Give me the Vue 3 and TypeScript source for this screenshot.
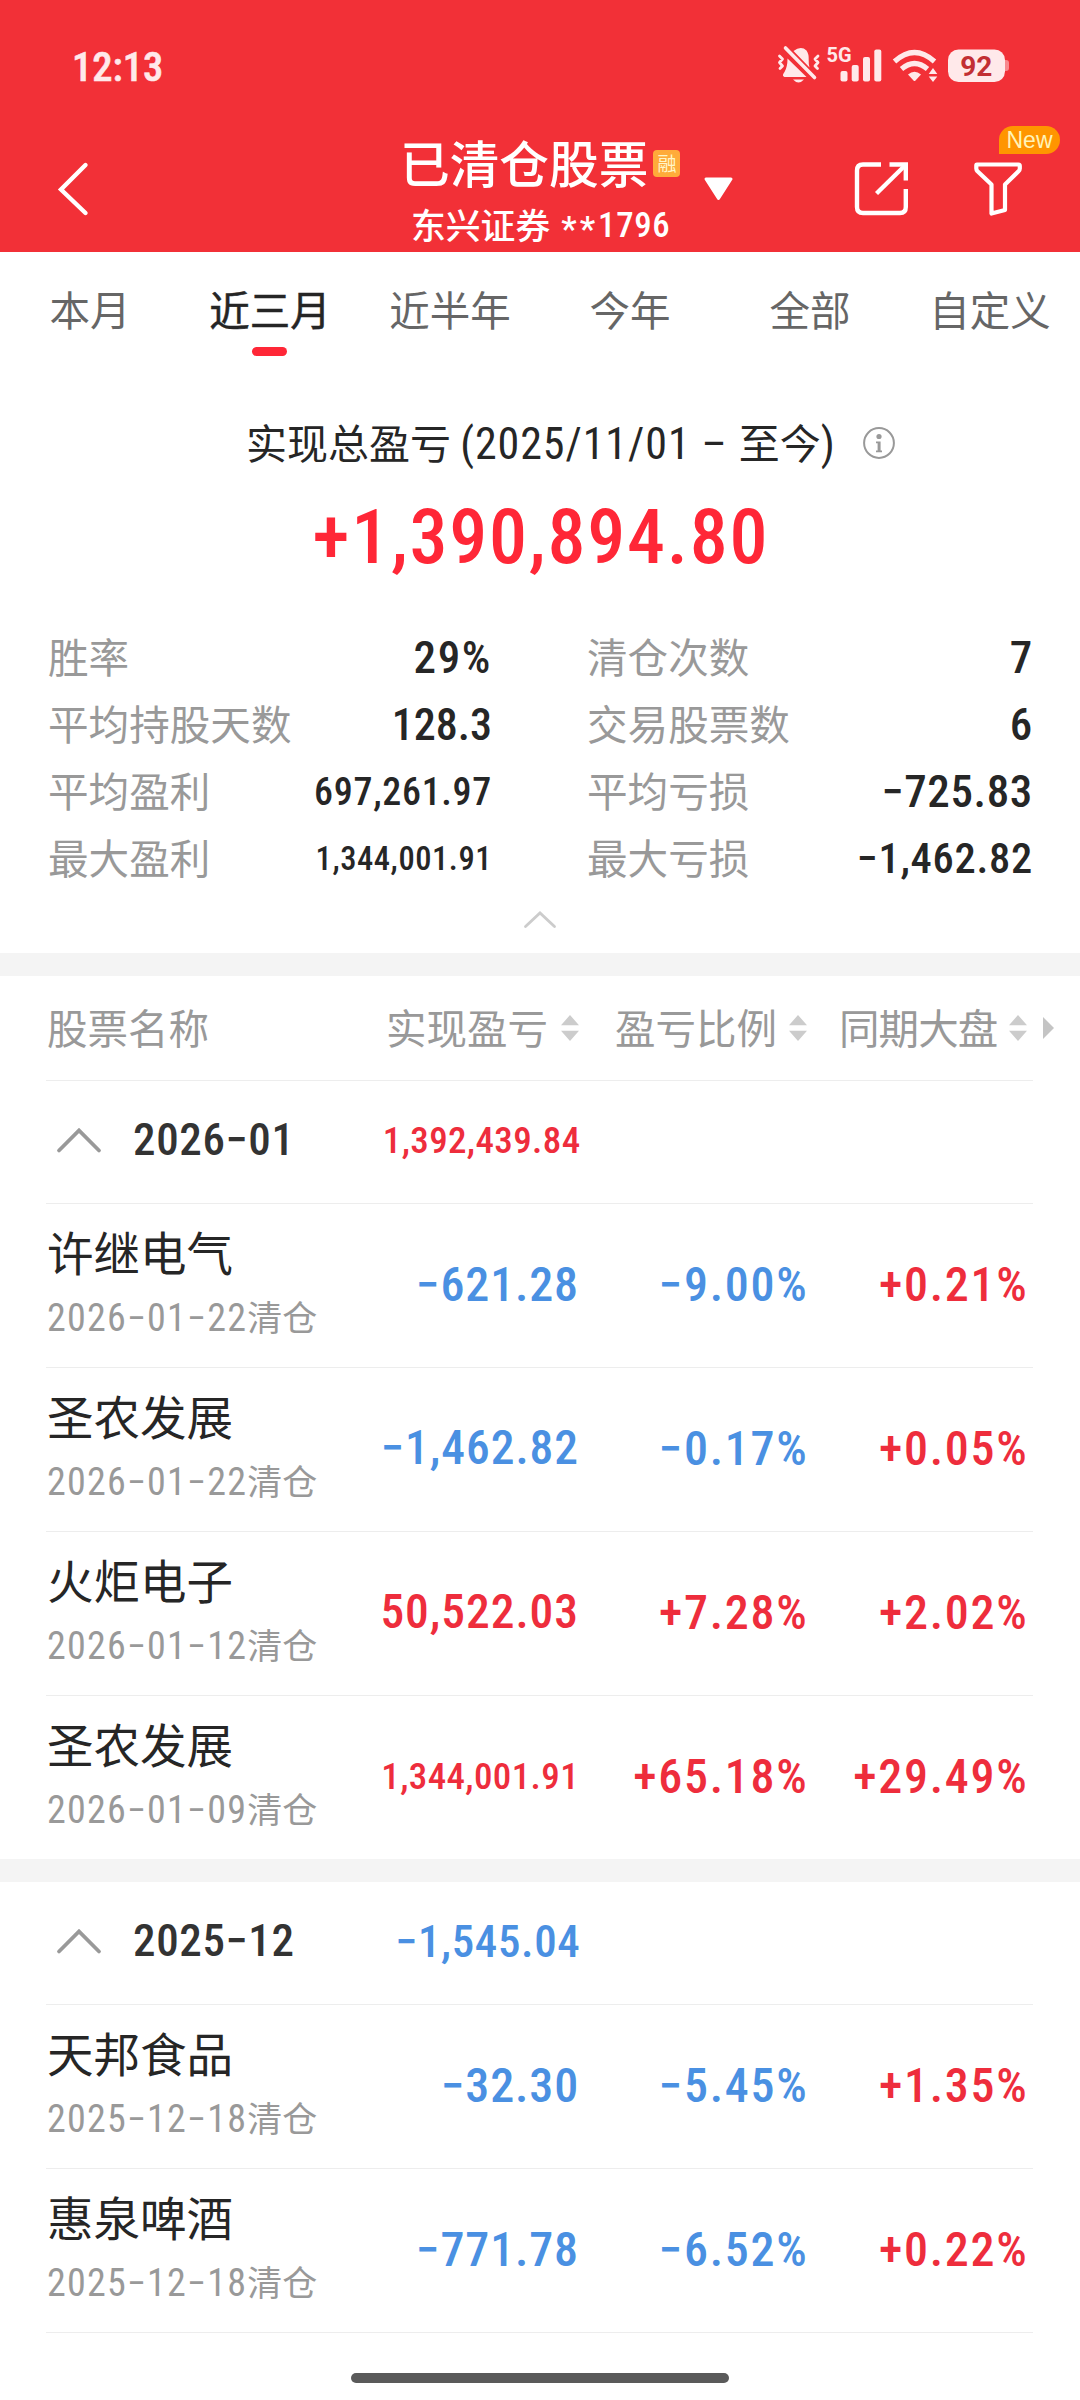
<script setup lang="ts">
type Tone = 'up' | 'down'

interface Stat {
  label: string
  value: string
  size: string
}

interface Row {
  name: string
  date: string
  profit: string
  profitTone: Tone
  profitSize: string
  ratio: string
  ratioTone: Tone
  market: string
}

interface Group {
  month: string
  total: string
  tone: Tone
  size: string
  rows: Row[]
}

const tabs: string[] = ['本月', '近三月', '近半年', '今年', '全部', '自定义']
const activeTab = '近三月'

const stats: Stat[] = [
  { label: '胜率', value: '29%', size: 'n45 wide' },
  { label: '清仓次数', value: '7', size: 'n45' },
  { label: '平均持股天数', value: '128.3', size: 'n44' },
  { label: '交易股票数', value: '6', size: 'n45' },
  { label: '平均盈利', value: '697,261.97', size: 'n38' },
  { label: '平均亏损', value: '−725.83', size: 'n45' },
  { label: '最大盈利', value: '1,344,001.91', size: 'n33' },
  { label: '最大亏损', value: '−1,462.82', size: 'n43' },
]

const columns: string[] = ['实现盈亏', '盈亏比例', '同期大盘']

const groups: Group[] = [
  {
    month: '2026−01',
    total: '1,392,439.84',
    tone: 'up',
    size: 'n37',
    rows: [
      { name: '许继电气', date: '2026−01−22', profit: '−621.28', profitTone: 'down', profitSize: 'n48', ratio: '−9.00%', ratioTone: 'down', market: '+0.21%' },
      { name: '圣农发展', date: '2026−01−22', profit: '−1,462.82', profitTone: 'down', profitSize: 'n47', ratio: '−0.17%', ratioTone: 'down', market: '+0.05%' },
      { name: '火炬电子', date: '2026−01−12', profit: '50,522.03', profitTone: 'up', profitSize: 'n47', ratio: '+7.28%', ratioTone: 'up', market: '+2.02%' },
      { name: '圣农发展', date: '2026−01−09', profit: '1,344,001.91', profitTone: 'up', profitSize: 'n37', ratio: '+65.18%', ratioTone: 'up', market: '+29.49%' },
    ],
  },
  {
    month: '2025−12',
    total: '−1,545.04',
    tone: 'down',
    size: 'n45',
    rows: [
      { name: '天邦食品', date: '2025−12−18', profit: '−32.30', profitTone: 'down', profitSize: 'n48', ratio: '−5.45%', ratioTone: 'down', market: '+1.35%' },
      { name: '惠泉啤酒', date: '2025−12−18', profit: '−771.78', profitTone: 'down', profitSize: 'n48', ratio: '−6.52%', ratioTone: 'down', market: '+0.22%' },
    ],
  },
]
</script>

<template>
  <div class="page">
    <header class="header">
      <div class="status">
        <span class="clock">12:13</span>
        <svg class="status-icons" width="240" height="48" viewBox="772 40 240 48">
          <g fill="#ffe9ea">
            <path d="M784.500 77 C782 76 783 74 784.500 72 Q787.500 67 787.500 58.500 L806.500 77 Z" />
            <path d="M793.500 51 Q801 45.500 806.500 50.500 Q809 54 808.700 60 Q808.500 64 809.500 67.500 Z" />
            <path d="M793 79.500 H804 Q798.500 85.500 793 79.500 Z" />
          </g>
          <g fill="none" stroke="#ffe9ea" stroke-linecap="round" stroke-linejoin="round">
            <path d="M785.500 48 L814.500 77.500" stroke-width="3.600" />
            <path d="M779.500 56 l3 3 l-3 3.500 l3 3.500 l-2.500 2.500 M818 56 l-3 3 l3 3.500 l-3 3.500 l2.500 2.500" stroke-width="2.800" />
          </g>
          <text x="826.500" y="61.500" class="five-g">5G</text>
          <g fill="#ffe9ea">
            <rect x="840.500" y="71" width="7" height="10.500" rx="2" />
            <rect x="851.700" y="65" width="7" height="16.500" rx="2" />
            <rect x="863" y="57" width="7" height="24.500" rx="2" />
            <rect x="874.300" y="49.500" width="7" height="32" rx="2" />
          </g>
          <g fill="none" stroke="#ffe9ea" stroke-width="5.200">
            <path d="M894.500 61.500 Q914.500 43.500 934.500 61.500" />
            <path d="M901.500 69 Q914.500 58 927.500 69" />
          </g>
          <path d="M908 74.500 Q914.500 69 921 74.500 L915.500 80.500 Q914.500 81.500 913.500 80.500 Z" fill="#ffe9ea" />
          <path d="M933 68 L937.300 74 H928.700 Z M933 82 L937.300 76.500 H928.700 Z" fill="#ffe9ea" />
          <path d="M1005 60 h1 q3 0 3 3 v5 q0 3 -3 3 h-1 z" fill="#f8888d" />
          <rect x="948" y="49.500" width="57" height="32.500" rx="10.500" fill="#ffe9ea" />
          <text x="976.300" y="75.700" class="battery">92</text>
        </svg>
      </div>
      <div class="nav">
        <svg class="back" width="34" height="60" viewBox="56 159 34 60">
          <path d="M85.500 165 L61 189.500 L85.500 213" fill="none" stroke="#fff" stroke-width="4.400" stroke-linecap="round" />
        </svg>
        <div class="title-box">
          <div class="title-line">
            <h1 class="title">已清仓股票</h1>
            <span class="margin-tag">融</span>
          </div>
          <p class="account">东兴证券 <span class="stars">**</span><span class="acct-num">1796</span></p>
        </div>
        <svg class="dropdown" width="32" height="28" viewBox="702 175 32 28">
          <path d="M706 179 H731 L718.500 198.500 Z" fill="#fff" stroke="#fff" stroke-width="3" stroke-linejoin="round" />
        </svg>
        <svg class="share" width="60" height="60" viewBox="851 158 60 60">
          <g fill="none" stroke="#fff" stroke-width="4.400">
            <path d="M881 164.500 H863 Q857 164.500 857 170.500 V207 Q857 213 863 213 H900 Q905.800 213 905.800 207 V189" />
            <path d="M889.500 164.500 H905.800 V180.500" />
            <path d="M905 165.500 L876.500 193.500" />
          </g>
        </svg>
        <div class="filter">
          <svg width="56" height="60" viewBox="970 158 56 60">
            <path d="M977 164.500 H1018.500 Q1019.800 164.500 1019.800 166 V168.500 Q1019.800 170 1018.500 171.300 L1005 184.500 V210 L991.500 213.500 V184.500 L977.500 171.300 Q976.300 170 976.300 168.500 V165.500 Q976.300 164.500 977 164.500 Z" fill="none" stroke="#fff" stroke-width="4.200" stroke-linejoin="round" />
          </svg>
          <span class="new">New</span>
        </div>
      </div>
    </header>

    <nav class="tabs">
      <span v-for="tab in tabs" :key="tab" class="tab" :class="{ active: tab === activeTab }">{{ tab }}</span>
    </nav>

    <section class="summary">
      <div class="range">
        <span class="range-text">实现总盈亏 <span class="range-num">(2025/11/01 – </span>至今<span class="range-num">)</span></span>
        <svg class="info" width="34" height="34" viewBox="0 0 34 34">
          <circle cx="17" cy="17" r="14.900" fill="none" stroke="#999" stroke-width="2" />
          <circle cx="17" cy="10.500" r="2.600" fill="#999" />
          <path d="M14 15.500 h4.600 v9 h1.400 v1.800 h-6 v-1.800 h1.600 v-7.200 h-1.600 z" fill="#999" />
        </svg>
      </div>
      <div class="total">+1,390,894.80</div>
      <div class="stats">
        <div v-for="s in stats" :key="s.label" class="stat">
          <span class="stat-label">{{ s.label }}</span>
          <span class="num" :class="s.size">{{ s.value }}</span>
        </div>
      </div>
      <svg class="fold" width="36" height="22" viewBox="0 0 36 22">
        <path d="M3.500 17.500 L18 4 L32.500 17.500" fill="none" stroke="#ccc" stroke-width="2.800" stroke-linecap="round" />
      </svg>
    </section>

    <section class="table">
      <div class="thead">
        <span class="th-name">股票名称</span>
        <span v-for="(c, i) in columns" :key="c" class="th" :class="'th' + i">
          <span>{{ c }}</span>
          <svg width="18" height="26" viewBox="0 0 18 26">
            <path d="M0 10.200 L9 0 L18 10.200 Z M0 15.800 L9 26 L18 15.800 Z" fill="#ccc" />
          </svg>
        </span>
        <svg class="more" width="11" height="22" viewBox="0 0 11 22">
          <path d="M0 0 L11 11 L0 22 Z" fill="#c4c4c4" />
        </svg>
      </div>
      <div v-for="g in groups" :key="g.month" class="group">
        <div class="group-head">
          <svg class="chev" width="46" height="28" viewBox="0 0 46 28">
            <path d="M3 24.500 L23 4.500 L43 24.500" fill="none" stroke="#999" stroke-width="3.800" stroke-linecap="round" />
          </svg>
          <span class="num n45 month">{{ g.month }}</span>
          <span class="num group-total" :class="[g.size, g.tone]">{{ g.total }}</span>
        </div>
        <div v-for="(r, i) in g.rows" :key="i" class="row">
          <div class="stock">
            <div class="name">{{ r.name }}</div>
            <div class="date"><span class="num n38">{{ r.date }}</span>清仓</div>
          </div>
          <span class="num c1" :class="[r.profitSize, r.profitTone]">{{ r.profit }}</span>
          <span class="num n48 wide c2" :class="r.ratioTone">{{ r.ratio }}</span>
          <span class="num n48 wide c3 up">{{ r.market }}</span>
        </div>
      </div>
    </section>

    <div class="home"><i></i></div>
  </div>
</template>

<style>
body {
  margin: 0;
  background: #fff;
}
</style>

<style scoped>
.page {
  width: 1080px;
  height: 2400px;
  overflow: hidden;
  display: flex;
  flex-direction: column;
  background: #fff;
  color: #262626;
  font-family: 'Noto Sans CJK SC', sans-serif;
}
.header {
  height: 252px;
  flex: none;
  background: #f23037;
  color: #fff;
}
.status {
  height: 126px;
  display: flex;
  justify-content: space-between;
  padding: 0 68px 0 72px;
}
.clock {
  margin-top: 43px;
  font: 500 40.500px/48px Roboto, sans-serif;
  font-stretch: 75%;
  -webkit-text-stroke: 0.600px #ffe9ea;
  color: #ffe9ea;
}
.status-icons {
  margin-top: 40px;
}
.five-g {
  font: 700 20px Roboto, sans-serif;
  fill: #ffe9ea;
}
.battery {
  font: 700 28px Roboto, sans-serif;
  fill: #c22f33;
  text-anchor: middle;
}
.nav {
  height: 126px;
  display: flex;
  align-items: flex-start;
}
.back {
  margin: 33px 0 0 56px;
}
.title-box {
  width: 280px;
  margin: 2px 0 0 313px;
}
.title-line {
  display: flex;
  align-items: center;
  height: 68px;
}
.title {
  margin: -3px 5px 0 -3px;
  font-size: 49.700px;
  line-height: 68px;
  font-weight: 500;
  white-space: nowrap;
}
.margin-tag {
  width: 27px;
  height: 27px;
  margin-top: 2px;
  border-radius: 4px;
  background: #ffab3a;
  color: #fff6c8;
  font-size: 19px;
  line-height: 26px;
  text-align: center;
}
.account {
  margin: 4px 0 0 8px;
  font-size: 34.800px;
  line-height: 48px;
  font-weight: 500;
  white-space: nowrap;
  display: flex;
}
.stars {
  margin-left: 11px;
  font-family: Roboto, sans-serif;
  letter-spacing: 3px;
  padding-top: 5px;
}
.acct-num {
  font-family: Roboto, sans-serif;
  font-weight: 500;
  font-stretch: 75%;
  letter-spacing: 0.700px;
  padding-top: 1px;
}
.dropdown {
  margin: 49px 0 0 19px;
}
.share {
  margin: 32px 0 0 117px;
}
.filter {
  position: relative;
  margin: 32px 0 0 59px;
}
.new {
  position: absolute;
  left: 29px;
  top: -32px;
  width: 61px;
  height: 28px;
  border-radius: 14px 14px 14px 0;
  background: #ff9500;
  color: #fff3b8;
  font: 400 23px/28px 'Liberation Sans', sans-serif;
  text-align: center;
}
.tabs {
  flex: none;
  height: 114px;
  display: flex;
}
.tab {
  width: 180px;
  padding-top: 27px;
  font-size: 40.500px;
  line-height: 60px;
  color: #666;
  text-align: center;
}
.tab.active {
  color: #252525;
  -webkit-text-stroke: 0.500px #252525;
}
.tab.active::after {
  content: '';
  display: block;
  width: 35px;
  height: 9px;
  margin: 8px 0 0 72px;
  border-radius: 5px;
  background: #ff2737;
}
.summary {
  flex: none;
  height: 587px;
  display: flex;
  flex-direction: column;
  align-items: center;
}
.range {
  display: flex;
  align-self: flex-start;
  align-items: center;
  margin: 46px 0 0 246px;
  height: 60px;
}
.range-text {
  width: 587px;
  font-size: 41px;
  line-height: 60px;
  white-space: nowrap;
}
.range-num {
  font-family: Roboto, sans-serif;
  font-size: 44px;
  font-stretch: 75%;
  letter-spacing: 0.920px;
  white-space: pre;
}
.info {
  margin: 1px 0 0 29px;
}
.total {
  margin-top: 20px;
  font: 500 76px/90px Roboto, sans-serif;
  font-stretch: 75%;
  letter-spacing: 0.023em;
  text-indent: 0.023em;
  color: #ff2737;
}
.stats {
  width: 1080px;
  box-sizing: border-box;
  padding: 0 48px 0 48px;
  margin-top: 42px;
  display: grid;
  grid-template-columns: 443px 445px;
  column-gap: 96px;
  grid-auto-rows: 67px;
}
.stat {
  display: flex;
  justify-content: space-between;
  align-items: center;
}
.stat .num {
  margin-right: -1px;
}
.stat-label {
  font-size: 40.600px;
  line-height: 60px;
  margin-top: -3px;
  color: #999;
}
.num {
  font-family: Roboto, sans-serif;
  font-weight: 500;
  font-stretch: 75%;
  white-space: nowrap;
}
.n48 {
  font-size: 48px;
  letter-spacing: 0.018em;
}
.n47 {
  font-size: 47.500px;
  letter-spacing: 0.020em;
}
.n45 {
  font-size: 45px;
  letter-spacing: 0.014em;
}
.n44 {
  font-size: 44px;
}
.n43 {
  font-size: 42.500px;
  letter-spacing: 0.017em;
}
.n38 {
  font-size: 38px;
  letter-spacing: 0.018em;
}
.n37 {
  font-size: 37px;
  letter-spacing: 0.010em;
}
.n33 {
  font-size: 32.500px;
  letter-spacing: 0.017em;
}
.wide {
  letter-spacing: 0.036em;
}
.fold {
  margin-top: 17px;
}
.table {
  flex: none;
  border-top: 23px solid #f4f4f4;
}
.thead {
  height: 104px;
  margin: 0 0 0 46px;
  display: flex;
  align-items: center;
  font-size: 40.500px;
  line-height: 60px;
  color: #999;
  white-space: nowrap;
  background: linear-gradient(#ededed, #ededed) 0 100% / 987px 1px no-repeat;
  padding-bottom: 1px;
}
.th-name {
  flex: none;
  width: 340px;
  text-indent: 1px;
  margin-top: -3px;
}
.th {
  flex: none;
  display: flex;
  align-items: center;
  justify-content: space-between;
}
.th span {
  margin-top: -3px;
}
.th0 {
  width: 193px;
}
.th1 {
  width: 192px;
  margin-left: 36px;
}
.th2 {
  width: 188px;
  margin-left: 32px;
  letter-spacing: -0.900px;
}
.more {
  flex: none;
  margin-left: 16px;
}
.group + .group {
  border-top: 23px solid #f4f4f4;
}
.group-head {
  height: 122px;
  margin: 0 47px 0 46px;
  border-bottom: 1px solid #ededed;
  display: flex;
  align-items: center;
}
.chev {
  margin: -4px 0 0 10px;
}
.month {
  width: 240px;
  margin: -5px 0 0 31px;
  color: #333;
}
.group-total {
  width: 207.500px;
  margin-top: -4px;
  text-align: right;
}
.row {
  height: 163px;
  margin: 0 47px 0 46px;
  border-bottom: 1px solid #ededed;
  display: flex;
  align-items: center;
}
.group:not(:last-child) .row:last-child {
  border-bottom: 0;
}
.stock {
  width: 290px;
  padding: 0 0 7px 1px;
  box-sizing: border-box;
}
.name {
  font-size: 46.500px;
  line-height: 68px;
}
.date {
  margin-top: 2px;
  font-size: 35px;
  line-height: 58px;
  color: #999;
  white-space: nowrap;
}
.date .num {
  font-weight: 400;
  letter-spacing: 0.032em;
}
.c1,
.c2,
.c3 {
  margin-top: -3px;
  text-align: right;
}
.c1 {
  width: 243px;
}
.c2 {
  width: 229.500px;
}
.c3 {
  width: 220px;
}
.up {
  color: #ee2d3c;
}
.down {
  color: #4a90e2;
}
.home {
  display: flex;
  justify-content: center;
  margin-top: 40px;
}
.home i {
  width: 378px;
  height: 10px;
  border-radius: 5px;
  background: #5a5a5a;
}
</style>
